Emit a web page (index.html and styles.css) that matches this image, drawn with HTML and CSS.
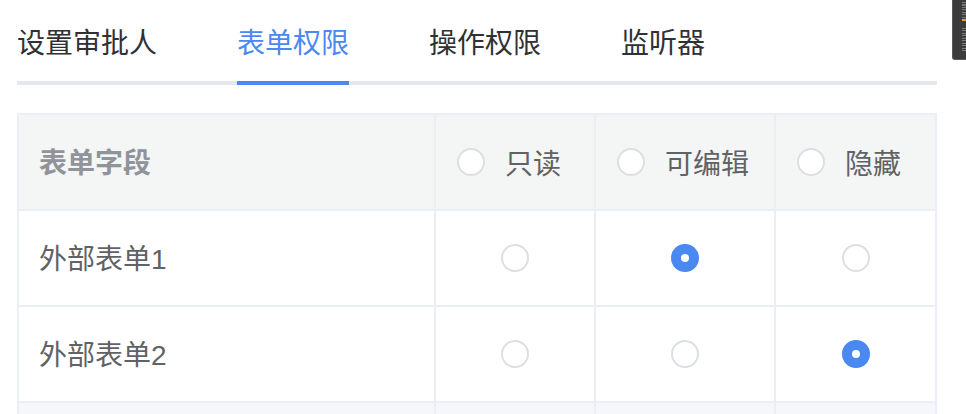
FILE: index.html
```html
<!DOCTYPE html>
<html lang="zh-CN">
<head>
<meta charset="utf-8">
<title>表单权限</title>
<link rel="stylesheet" href="styles.css">
</head>
<body>
<div class="page">
  <div class="tabs">
    <div class="tab">设置审批人</div>
    <div class="tab active">表单权限</div>
    <div class="tab">操作权限</div>
    <div class="tab">监听器</div>
  </div>

  <div class="grid">
    <div class="cell head field">表单字段</div>
    <div class="cell head opt"><span class="radio"></span><span class="label">只读</span></div>
    <div class="cell head opt"><span class="radio"></span><span class="label">可编辑</span></div>
    <div class="cell head opt"><span class="radio"></span><span class="label">隐藏</span></div>

    <div class="cell field">外部表单1</div>
    <div class="cell center"><span class="radio"></span></div>
    <div class="cell center"><span class="radio checked"></span></div>
    <div class="cell center"><span class="radio"></span></div>

    <div class="cell field">外部表单2</div>
    <div class="cell center"><span class="radio"></span></div>
    <div class="cell center"><span class="radio"></span></div>
    <div class="cell center"><span class="radio checked"></span></div>

    <div class="cell field hover"></div>
    <div class="cell center hover"></div>
    <div class="cell center hover"></div>
    <div class="cell center hover"></div>
  </div>
</div>

<div class="minimap">
  <div class="mm-lines top"></div>
  <div class="mm-mark"></div>
  <div class="mm-lines bottom"></div>
</div>
</body>
</html>
```

FILE: styles.css
```css
html, body {
  margin: 0;
  padding: 0;
  background: #ffffff;
  overflow: hidden;
}

body {
  font-family: "Liberation Sans", "Noto Sans CJK SC", sans-serif;
  font-size: 28px;
  color: #606266;
}

.page {
  width: 920px;
  padding: 5px 0 0 17px;
}

.tabs {
  display: flex;
  height: 80px;
  box-shadow: inset 0 -4px 0 #e4e7ed;
}

.tab {
  height: 80px;
  line-height: 78px;
  padding: 0 40px;
  color: #303133;
  box-sizing: border-box;
}

.tab:first-child {
  padding-left: 0;
}

.tab.active {
  color: #4a88f2;
  padding: 0;
  margin: 0 40px;
  box-shadow: inset 0 -4px 0 #4a88f2;
}

.grid {
  margin-top: 28px;
  display: grid;
  grid-template-columns: 417px 160px 180px 161px;
  border-left: 2px solid #ebeef5;
  border-top: 2px solid #ebeef5;
}

.cell {
  height: 96px;
  box-sizing: border-box;
  border-right: 2px solid #ebeef5;
  border-bottom: 2px solid #ebeef5;
  display: flex;
  align-items: center;
  background: #ffffff;
}

.cell.head {
  background: #f4f6f6;
}

.cell.hover {
  background: #f5f7fa;
}

.field {
  padding-left: 20px;
  padding-bottom: 2px;
}

.head.field {
  color: #909399;
  font-weight: bold;
}

.opt {
  padding-left: 21px;
  gap: 20px;
  color: #606266;
}

.center {
  justify-content: center;
}

.radio {
  width: 28px;
  height: 28px;
  box-sizing: border-box;
  border: 2px solid #dcdfe6;
  border-radius: 50%;
  background: #ffffff;
  position: relative;
  flex: none;
}

.radio.checked {
  border-color: #4a88f2;
  background: #4a88f2;
}

.radio.checked::after {
  content: "";
  position: absolute;
  left: 50%;
  top: 50%;
  width: 8px;
  height: 8px;
  margin: -4px 0 0 -4px;
  border-radius: 50%;
  background: #ffffff;
}

.minimap {
  position: absolute;
  top: 0;
  left: 952px;
  width: 20px;
  height: 60px;
  background: #3c3c3c;
  border-left: 1px solid #5a5a5a;
  border-bottom: 1px solid #5a5a5a;
  border-bottom-left-radius: 3px;
  box-sizing: border-box;
  padding: 2px 0 0 9px;
}

.mm-lines {
  background: repeating-linear-gradient(to bottom, #7a7a7a 0, #7a7a7a 1px, transparent 1px, transparent 2.5px);
  height: 16px;
}

.mm-lines.bottom {
  margin-top: 7px;
  height: 24px;
}

.mm-mark {
  height: 2px;
  margin-top: 1px;
  background: #f0a020;
}
```
